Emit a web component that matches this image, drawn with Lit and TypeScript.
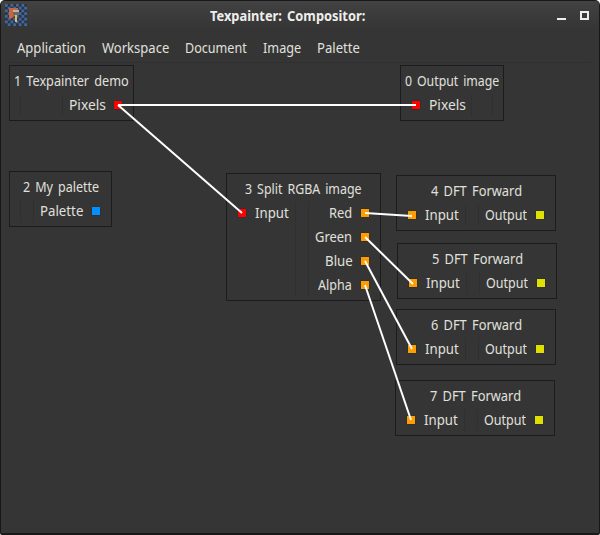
import { LitElement, html, svg, css } from "lit";
import { customElement, property } from "lit/decorators.js";
import { styleMap } from "lit/directives/style-map.js";

interface Port { name: string; width: number; color: string }
interface GraphNode {
  title: string; titleWidth: number;
  x: number; y: number; width: number;
  left: number; right: number;
  inputs: Port[]; outputs: Port[];
}

const RED = "#ff0000", ORANGE = "#ff9c00", YELLOW = "#e0e000", BLUE = "#0090ff";

const dft = (id: number, x: number, y: number): GraphNode => ({
  title: `${id} DFT Forward`, titleWidth: 91, x, y, width: 160, left: 68, right: 76,
  inputs: [{ name: "Input", width: 34, color: ORANGE }],
  outputs: [{ name: "Output", width: 42, color: YELLOW }],
});

const NODES: GraphNode[] = [
  { title: "1 Texpainter demo", titleWidth: 115, x: 9, y: 65, width: 125, left: 10, right: 70,
    inputs: [], outputs: [{ name: "Pixels", width: 36.5, color: RED }] },
  { title: "0 Output image", titleWidth: 94, x: 400, y: 65, width: 104, left: 70, right: 10,
    inputs: [{ name: "Pixels", width: 36.5, color: RED }], outputs: [] },
  { title: "2 My palette", titleWidth: 76, x: 9, y: 171, width: 103, left: 10, right: 77,
    inputs: [], outputs: [{ name: "Palette", width: 43.5, color: BLUE }] },
  { title: "3 Split RGBA image", titleWidth: 117, x: 226, y: 173, width: 155, left: 68, right: 71,
    inputs: [{ name: "Input", width: 34, color: RED }],
    outputs: [
      { name: "Red", width: 23, color: ORANGE },
      { name: "Green", width: 37, color: ORANGE },
      { name: "Blue", width: 27.5, color: ORANGE },
      { name: "Alpha", width: 34, color: ORANGE },
    ] },
  dft(4, 396, 175), dft(5, 397, 243), dft(6, 396, 309), dft(7, 395, 380),
];

const LINKS = [
  [118, 105, 416, 105], [118, 105, 242, 213], [365, 213, 412, 216],
  [365, 237, 413, 284], [365, 261, 412, 349], [365, 285, 411, 420],
];

/** A label condensed or widened to fill its allotted width. */
@customElement("fit-label")
class FitLabel extends LitElement {
  @property() text = "";
  @property({ type: Number }) width = 0;
  static styles = css`
    :host { display: block; white-space: pre; flex: none; }
    span { display: inline-block; transform-origin: 0 50%; word-spacing: 2px; }
  `;
  render() { return html`<span>${this.text}</span>`; }
  updated() {
    const span = this.renderRoot.querySelector("span")!;
    span.style.transform = `scaleX(${this.width / span.offsetWidth})`;
    this.style.width = `${this.width}px`;
  }
}

@customElement("graph-node")
class GraphNodeView extends LitElement {
  @property({ attribute: false }) node!: GraphNode;
  static styles = css`
    :host { display: block; }
    .box { box-sizing: border-box; border: 1px solid #1c1c1c; padding: 4px 0; display: flex; flex-direction: column; align-items: center; }
    .title { height: 24px; line-height: 22px; }
    .body { align-self: stretch; display: flex; }
    .col { display: flex; flex-direction: column; flex: none; margin: -1px 0; }
    .sep { width: 1px; background: #303030; flex: none; }
    .mid { flex: 1; min-height: 22px; }
    .port { display: flex; align-items: center; gap: 9px; height: 24px; line-height: 24px; padding-left: 11px; }
    .out { justify-content: flex-end; padding: 0 11px 0 0; }
    .dot { flex: none; width: 8px; height: 8px; box-shadow: 0 0 1px #00000080; }
  `;
  render() {
    const n = this.node;
    return html`<div class="box" style=${styleMap({ width: `${n.width}px` })}>
      <div class="title"><fit-label .text=${n.title} .width=${n.titleWidth}></fit-label></div>
      <div class="body">
        <div class="col" style=${styleMap({ width: `${n.left}px` })}>
          ${n.inputs.map((p) => html`<div class="port"><i class="dot" style=${styleMap({ background: p.color })}></i><fit-label .text=${p.name} .width=${p.width}></fit-label></div>`)}
        </div>
        <div class="sep"></div><div class="mid"></div><div class="sep"></div>
        <div class="col" style=${styleMap({ width: `${n.right}px` })}>
          ${n.outputs.map((p) => html`<div class="port out"><fit-label .text=${p.name} .width=${p.width}></fit-label><i class="dot" style=${styleMap({ background: p.color })}></i></div>`)}
        </div>
      </div>
    </div>`;
  }
}

@customElement("app-root")
class AppRoot extends LitElement {
  static styles = css`
    :host { display: block; width: 600px; height: 535px; background: #fff; font: 14px/24px "Noto Sans", "Open Sans", sans-serif; color: #e0e0dd; }
    .window { position: relative; box-sizing: border-box; width: 600px; height: 535px; border: 1px solid #181818; border-bottom-width: 2px; border-radius: 5px 5px 2px 2px; background: linear-gradient(#424242, #353535 28px); overflow: hidden; }
    .titlebar { height: 31px; display: grid; grid-template-columns: 209px 156px 1fr; }
    .logo { margin: 3px 0 0 4px; display: block; }
    .caption { font-weight: bold; line-height: 29px; color: #eeeeec; }
    .controls { display: flex; justify-content: flex-end; gap: 14px; padding: 10px 10px 0 0; height: 9px; align-items: flex-end; }
    .min { width: 9px; height: 2px; background: #eeeeec; }
    .max { width: 9px; height: 9px; box-sizing: border-box; border: 2px solid #eeeeec; }
    .menu { display: flex; gap: 16px; height: 30px; margin: 0 8px; padding-left: 8px; border-bottom: 1px solid #303030; line-height: 32px; }
    .item { position: absolute; }
    .links { position: absolute; left: -1px; top: -1px; pointer-events: none; }
  `;
  render() {
    const checks = [];
    for (let r = 0; r < 8; r++) for (let c = 0; c < 8; c++)
      if ((r + c) % 2 === 0) checks.push(svg`<rect x=${c * 2.75} y=${r * 2.75} width="2.75" height="2.75" fill="#42679f"/>`);
    const menu: [string, number][] = [["Application", 69], ["Workspace", 67], ["Document", 62], ["Image", 38], ["Palette", 43]];
    return html`<div class="window">
      <div class="titlebar">
        <svg class="logo" width="22" height="22" viewBox="0 0 22 22">
          <rect width="22" height="22" fill="#2b3440"/>
          ${checks}
          <path d="M4 4H13V10L10 12L8 13L6 15L4 14Z" fill="#c9663e"/>
          <path d="M8 6H14V8H8Z" fill="#b5b8b2"/><path d="M8 8H14V11H8Z" fill="#666b68"/>
          <path d="M10 11H12V18H10Z" fill="#e4b865"/>
        </svg>
        <fit-label class="caption" .text=${"Texpainter: Compositor:"} .width=${155}></fit-label>
        <div class="controls"><i class="min"></i><i class="max"></i></div>
      </div>
      <div class="menu">${menu.map(([t, w]) => html`<fit-label .text=${t} .width=${w}></fit-label>`)}</div>
      ${NODES.map((n) => html`<graph-node class="item" .node=${n} style=${styleMap({ left: `${n.x - 1}px`, top: `${n.y - 1}px` })}></graph-node>`)}
      <svg class="links" width="600" height="535" stroke="#fff" stroke-width="2">
        ${LINKS.map(([a, b, c, d]) => svg`<line x1=${a} y1=${b} x2=${c} y2=${d} />`)}
      </svg>
    </div>`;
  }
}
